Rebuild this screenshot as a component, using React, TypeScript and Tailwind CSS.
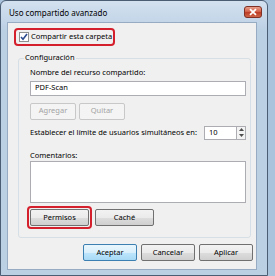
import React from "react";

const font = { fontFamily: '"Noto Sans", "Liberation Sans", sans-serif' };

function Btn({ children, w = "w-[54px]", disabled = false, def = false }: { children: React.ReactNode; w?: string; disabled?: boolean; def?: boolean }) {
  return (
    <div
      className={`${w} h-[17px] rounded-[2px] border flex items-center justify-center text-[7.5px] leading-none whitespace-nowrap ${
        disabled
          ? "border-[#c8c8c8] bg-[#f4f4f4] text-[#a3a3a3]"
          : def
          ? "border-[#3c7fb1] bg-[linear-gradient(#eaf6fd_0%,#d9f0fc_50%,#bee6fd_51%,#a7d9f5_100%)] text-black"
          : "border-[#707070] bg-[linear-gradient(#f2f2f2_0%,#ebebeb_50%,#dddddd_51%,#cfcfcf_100%)] text-black"
      }`}
    >
      {children}
    </div>
  );
}

function CloseIcon() {
  return (
    <svg width="18" height="12" viewBox="0 0 18 12" className="mr-[1px] shrink-0">
      <defs>
        <linearGradient id="cg" x1="0" y1="0" x2="0" y2="1">
          <stop offset="0" stopColor="#eaa593" />
          <stop offset="0.45" stopColor="#d4644c" />
          <stop offset="0.55" stopColor="#bd3d24" />
          <stop offset="1" stopColor="#cf6a4c" />
        </linearGradient>
      </defs>
      <rect x="0.5" y="0.5" width="17" height="11" rx="2.5" fill="url(#cg)" stroke="#7e3124" />
      <path d="M6 3.2 L12 8.8 M12 3.2 L6 8.8" stroke="#ffffff" strokeWidth="1.8" />
    </svg>
  );
}

export default function App() {
  return (
    <div style={font} className="w-[275px] h-[276px] bg-[#a9c3dd] relative overflow-hidden">
      <div className="w-[268px] h-[276px] border border-[#4a5d72] rounded-t-[6px] bg-[linear-gradient(#d3e1ef,#bcd0e4_30px,#bcd0e4)] flex flex-col">
        <div className="h-[21px] flex items-center justify-between pl-[8px] pr-[4px]">
          <span className="text-[8px] text-black leading-none mt-[2px] whitespace-nowrap">Uso compartido avanzado</span>
          <CloseIcon />
        </div>
        <div className="flex-1 px-[6px] pb-[5px] flex">
          <div className="w-[250px] h-[248px] bg-[#f0f0f0] border border-[#97acc2] flex flex-col">
            <div className="mt-[5px] ml-[6px] w-[101px] h-[18px] rounded-[4px] border-2 border-[#d4202c] flex items-center pl-[3px] gap-[2px]">
              <div className="w-[10px] h-[10px] border border-[#8e8f8f] bg-white flex items-center justify-center">
                <svg width="8" height="8" viewBox="0 0 8 8">
                  <path d="M1 4 L3 6.3 L7 1" stroke="#2c4b8e" strokeWidth="1.6" fill="none" />
                </svg>
              </div>
              <span className="text-[7.5px] leading-none text-black whitespace-nowrap">Compartir esta carpeta</span>
            </div>
            <div className="relative mt-[12px] ml-[10px] w-[233px] h-[180px] border border-[#d5dfe5] rounded-[3px] pt-[10px] pl-[11px] pr-[5px] flex flex-col">
              <span className="absolute -top-[5px] left-[5px] px-[1px] bg-[#f0f0f0] text-[7.5px] leading-none whitespace-nowrap">Configuración</span>
              <span className="text-[7.5px] leading-none whitespace-nowrap">Nombre del recurso compartido:</span>
              <div className="mt-[4px] h-[15px] w-[216px] bg-white border border-[#abadb3] flex items-center pl-[4px] text-[7.5px]">PDF-Scan</div>
              <div className="mt-[7px] flex gap-[3px]">
                <Btn w="w-[46px]" disabled>Agregar</Btn>
                <Btn w="w-[46px]" disabled>Quitar</Btn>
              </div>
              <div className="mt-[6px] flex items-center justify-between w-[216px]">
                <span className="text-[7.5px] leading-none whitespace-nowrap">Establecer el límite de usuarios simultáneos en:</span>
                <div className="w-[42px] h-[14px] bg-white border border-[#abadb3] flex items-center justify-between pl-[4px]">
                  <span className="text-[7.5px] leading-none">10</span>
                  <div className="w-[9px] h-[12px] border-l border-[#abadb3] bg-[#f3f3f3] flex flex-col items-center justify-around">
                    <svg width="5" height="3" viewBox="0 0 5 3"><path d="M0 3 L2.5 0 L5 3Z" fill="#4d4d4d" /></svg>
                    <svg width="5" height="3" viewBox="0 0 5 3"><path d="M0 0 L2.5 3 L5 0Z" fill="#4d4d4d" /></svg>
                  </div>
                </div>
              </div>
              <span className="mt-[12px] text-[7.5px] leading-none whitespace-nowrap">Comentarios:</span>
              <div className="mt-[2px] h-[42px] w-[216px] bg-white border border-[#abadb3]" />
              <div className="mt-[3px] -ml-[3px] flex gap-[3px] items-center">
                <div className="rounded-[4px] border-2 border-[#d4202c] p-[1px]">
                  <Btn w="w-[59px]">Permisos</Btn>
                </div>
                <Btn w="w-[59px]">Caché</Btn>
              </div>
            </div>
            <div className="mt-[6px] ml-[75px] flex gap-[4px]">
              <Btn def>Aceptar</Btn>
              <Btn>Cancelar</Btn>
              <Btn>Aplicar</Btn>
            </div>
          </div>
        </div>
      </div>
    </div>
  );
}
